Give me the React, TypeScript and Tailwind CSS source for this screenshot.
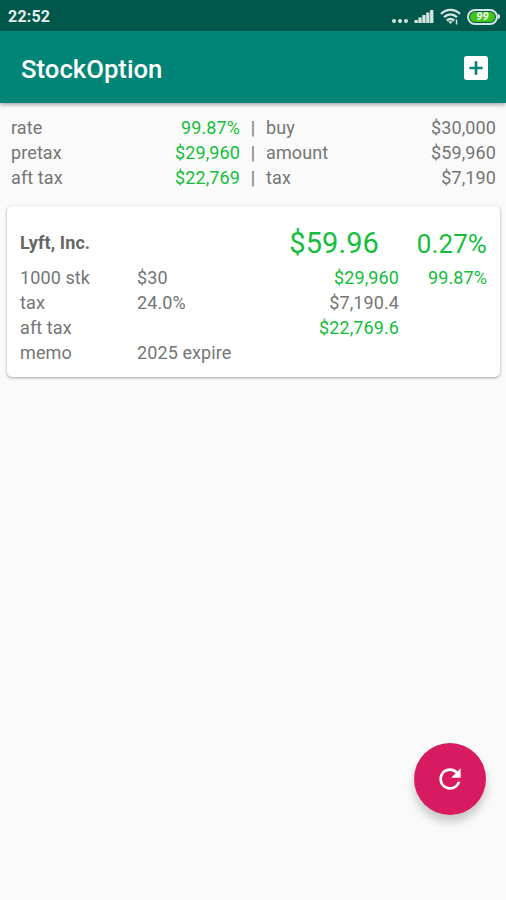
import { MdAddBox, MdRefresh } from "react-icons/md";

const summary = [
  { label: "rate", value: "99.87%", label2: "buy", value2: "$30,000" },
  { label: "pretax", value: "$29,960", label2: "amount", value2: "$59,960" },
  { label: "aft tax", value: "$22,769", label2: "tax", value2: "$7,190" },
];

function StatusBar() {
  return (
    <div className="flex h-[31px] items-center justify-between bg-[#00574b] pl-2 pr-[6px] pt-[2px]">
      <span className="pt-px text-[16px] font-bold leading-none tracking-[0.2px] text-[#e4efed]">
        22:52
      </span>
      <div className="flex items-center text-[#d5e5e2]">
        <svg width="18" height="18" viewBox="0 0 18 18" fill="currentColor">
          <circle cx="3" cy="13" r="2" />
          <circle cx="9" cy="13" r="2" />
          <circle cx="15" cy="13" r="2" />
        </svg>
        <svg
          className="ml-[5px]"
          width="20"
          height="18"
          viewBox="0 0 20 18"
          fill="currentColor"
        >
          <rect x="0.5" y="12" width="3.3" height="3" />
          <rect x="4.4" y="9.5" width="3.3" height="5.5" />
          <rect x="8.3" y="7" width="3.3" height="8" />
          <rect x="12.2" y="4.5" width="3.3" height="10.5" />
          <rect x="16.1" y="2" width="3.3" height="13" />
        </svg>
        <svg
          className="ml-[6px]"
          width="22"
          height="18"
          viewBox="0 0 22 18"
          fill="none"
          stroke="currentColor"
          strokeWidth="2.4"
        >
          <path d="M1 5.8C6.5.6 14.5.6 20 5.8" />
          <path d="M4 9.2c4-3.7 9-3.7 13 0" />
          <path d="M6.8 12.5c2.3-2 5.1-2 7.4 0" />
          <path d="M8 13.2h5L10.5 16z" fill="currentColor" stroke="none" />
          <path d="M16.5 11.5v5" strokeWidth="1.5" />
        </svg>
        <div className="ml-[5px] flex items-center">
          <div className="flex h-[16px] w-[31px] items-center justify-center rounded-full border-2 border-[#d5e5e2] p-px">
            <div className="flex h-full w-full items-center justify-center rounded-full bg-[#43c51b] text-[11px] font-bold italic leading-none text-white">
              99
            </div>
          </div>
          <div className="h-[5px] w-[2px] rounded-r-sm bg-[#d5e5e2]" />
        </div>
      </div>
    </div>
  );
}

function App() {
  return (
    <div className="relative flex h-[900px] w-[506px] flex-col overflow-hidden bg-[#fafafa] font-[Roboto,sans-serif] text-[18px] leading-[25px] tracking-[0.1px] text-[#757575]">
      <StatusBar />
      <div className="flex h-[72px] shrink-0 items-center justify-between bg-[#008577] pl-[21px] pr-[14px] shadow-[0_2px_4px_rgba(0,0,0,0.32)]">
        <h1 className="pt-[5px] text-[25.7px] font-medium tracking-normal text-white">
          StockOption
        </h1>
        <MdAddBox className="mt-px size-8 text-white" />
      </div>

      <div className="flex flex-col pl-[11px] pr-[10px] pt-3">
        {summary.map((row) => (
          <div key={row.label} className="flex">
            <span className="w-[100px]">{row.label}</span>
            <span className="w-[129px] text-right text-[#14be3c]">
              {row.value}
            </span>
            <span className="w-[26px] text-center">|</span>
            <span className="flex-1">{row.label2}</span>
            <span>{row.value2}</span>
          </div>
        ))}
      </div>

      <div className="ml-[7px] mr-[6px] mt-[16px] flex h-[171px] flex-col rounded-[5px] bg-white px-[13px] pt-[18px] shadow-[0_1px_3px_rgba(0,0,0,0.36)]">
        <div className="flex h-[41px] items-start">
          <span className="flex-1 pt-px font-bold leading-[35px] text-[#666]">
            Lyft, Inc.
          </span>
          <span className="text-[29px] leading-[39px] text-[#14be3c]">
            $59.96
          </span>
          <span className="w-[108px] text-right text-[26px] leading-[41px] text-[#14be3c]">
            0.27%
          </span>
        </div>
        <div className="grid grid-cols-[117px_132px_130px_1fr]">
          <span>1000 stk</span>
          <span>$30</span>
          <span className="text-right text-[#14be3c]">$29,960</span>
          <span className="text-right text-[#14be3c]">99.87%</span>
          <span>tax</span>
          <span>24.0%</span>
          <span className="text-right">$7,190.4</span>
          <span />
          <span>aft tax</span>
          <span />
          <span className="text-right text-[#14be3c]">$22,769.6</span>
          <span />
          <span>memo</span>
          <span>2025 expire</span>
        </div>
      </div>

      <button className="absolute left-[414px] top-[743px] flex size-[72px] items-center justify-center rounded-full bg-[#d81b60] text-white shadow-[0_7px_10px_rgba(0,0,0,0.2)]">
        <MdRefresh className="size-8" />
      </button>
    </div>
  );
}

export default App;
